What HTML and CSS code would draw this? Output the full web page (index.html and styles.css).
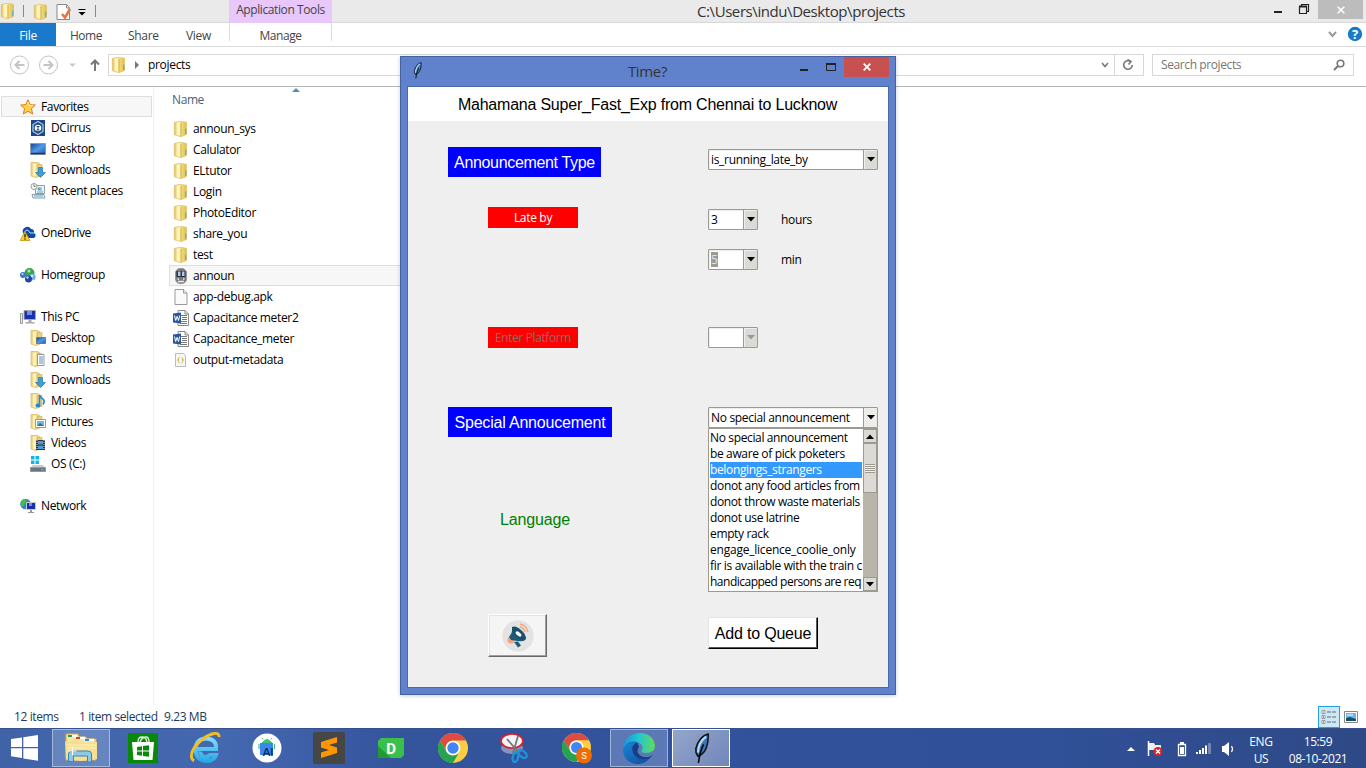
FILE: index.html
```html
<!DOCTYPE html>
<html lang="en">
<head>
<meta charset="utf-8">
<title>projects</title>
<link rel="stylesheet" href="styles.css">
</head>
<body>
<svg class="defs" aria-hidden="true">
  <defs>
    <linearGradient id="gold" x1="0" x2="1"><stop offset="0" stop-color="#d9b750"/><stop offset=".25" stop-color="#fff3b5"/><stop offset=".6" stop-color="#f1dc7c"/><stop offset="1" stop-color="#dfbd4c"/></linearGradient>
    <linearGradient id="sky" x1="0" y1="0" x2="1" y2="1"><stop offset="0" stop-color="#173f94"/><stop offset=".5" stop-color="#4f9be6"/><stop offset="1" stop-color="#1f58ad"/></linearGradient>
    <linearGradient id="edge" x1="0" x2="1"><stop offset="0" stop-color="#1695dc"/><stop offset=".5" stop-color="#25c6d2"/><stop offset="1" stop-color="#62dc55"/></linearGradient>
    <linearGradient id="edgeb" x1="0" y1="0" x2="1" y2="1"><stop offset="0" stop-color="#1a87d9"/><stop offset="1" stop-color="#114a9c"/></linearGradient>
    <linearGradient id="ieg" x1="0" y1="0" x2="0" y2="1"><stop offset="0" stop-color="#7fdcff"/><stop offset="1" stop-color="#2ba8e4"/></linearGradient>
    <symbol id="folder" viewBox="0 0 16 16"><path d="M1.300 1.500 6.500.3l7 1v12.200L8 15.700 1.300 13.800z" fill="url(#gold)" stroke="#dcc06a" stroke-width=".7"/><path d="M4.500 2.500 7.500 1.200v13.600l-2.500-1z" fill="#fff4bd"/><path d="M8 2v12.800" stroke="#cfae49"/><path d="M12.800 7.500v5.500" stroke="#4aa5c8" stroke-width="1"/></symbol>
    <symbol id="half" viewBox="0 0 16 16"><path d="M1 .5h6.500l2 1v13L5.500 15.500 1 14z" fill="#eed891" stroke="#d3b65b" stroke-width=".7"/><path d="M3 2 6 1v13l-3 .5z" fill="#fff0b6"/><path d="M7.500 2.500h4.500v11H7.500z" fill="#ead182" stroke="#cfad51" stroke-width=".6"/></symbol>
    <symbol id="chrome" viewBox="0 0 30 30"><circle cx="15" cy="15" r="15" fill="#fbce45"/><path d="M2 7.500A15 15 0 0 1 28 7.500H15a7.500 7.500 0 0 0-6.500 11z" fill="#de4b40"/><path d="M2 7.500A15 15 0 0 0 15 30l6.500-11.300A7.500 7.500 0 0 1 8.500 18.700z" fill="#24a353"/><circle cx="15" cy="15" r="7.300" fill="#fff"/><circle cx="15" cy="15" r="5.700" fill="#4285f4"/></symbol>
    <symbol id="word" viewBox="0 0 16 16"><path d="M5 .5h7l3.500 3.500v11.500H5z" fill="#fff" stroke="#888"/><path d="M12 .5V4h3.500" fill="none" stroke="#888"/><path d="M8 5.500h6M9 7.500h5M9 9.500h5M8 11.500h6M7 13.500h7" stroke="#777"/><path d="M0 3.500 8 2.500v11L0 12.500z" fill="#2b579a"/><path d="m1.500 5.500 1.200 5 1.400-4.200 1.400 4.200 1.200-5" fill="none" stroke="#fff"/></symbol>
    <symbol id="feather" viewBox="0 0 16 30"><path d="M14.500 1C9 2 4 8 2.500 15c-.5 3 .3 5 2 7.500C9 21 13 16 14 9c.4-3 .7-6 .5-8z" fill="#3f74b8" stroke="#111" stroke-width="1.400"/><path d="M12.500 3.500C8 6.500 5 12 4.500 19" fill="none" stroke="#b9dcf5" stroke-width="2"/><path d="M10 11C8.500 14 6.500 18 5 29" fill="none" stroke="#000" stroke-width="1.500"/></symbol>
    <symbol id="down" viewBox="0 0 10 5"><path d="M1 0h8L5 4.500z" fill="currentColor"/></symbol>
    <symbol id="darrow" viewBox="0 0 16 16"><path d="M8.500 5.500h4v5h3L10.500 15.500l-5-5h3z" fill="#39a0df" stroke="#2278b0" stroke-width=".7"/></symbol>
    <symbol id="pc" viewBox="0 0 16 16"><path d="M.5 4.500h2v10h-2z" fill="#eee" stroke="#999"/><path d="M4 1.500h11.500v9H4z" fill="#1b31a8" stroke="#aaa"/><path d="M7 2h5v4H7z" fill="#6d8bf0"/><path d="M8.500 11h3v2h3v1.500H5.500V13h3z" fill="#aaa"/></symbol>
  </defs>
</svg>

<div class="desktop">
  <header class="titlebar">
    <svg class="ic qa1"><use href="#folder"/></svg><i class="sep s1"></i>
    <svg class="ic qa2"><use href="#folder"/></svg>
    <svg class="ic qa3" viewBox="0 0 16 16"><path d="M1 .5h9.500L13.500 4v11.500H1z" fill="#fff" stroke="#888"/><path d="M10.500.5V4h3" fill="none" stroke="#888"/><path d="m6 10 3 3.500 5-8.500" fill="none" stroke="#e87440" stroke-width="2.600"/></svg>
    <svg class="qa4" viewBox="0 0 8 7"><path d="M.5 0h7v1h-7z"/><path d="M.5 3h7L4 6.500z"/></svg><i class="sep s2"></i>
    <span class="tools">Application Tools</span>
    <span class="path">C:\Users\indu\Desktop\projects</span>
    <svg class="winbtns" viewBox="0 0 46 22"><path d="M1 12h8" stroke="#222" stroke-width="2"/><path d="M26.500 6.500h7v7h-7zM28.500 6V4.500h7v7H34" fill="none" stroke="#222" stroke-width="1.200"/><path d="M26 6.500h8" stroke="#222" stroke-width="2"/></svg>
    <span class="close"><svg viewBox="0 0 8 8"><path d="m.7.7 6.600 6.600m0-6.600L.7 7.300" stroke="#fff" stroke-width="1.600"/></svg></span>
  </header>
  <nav class="ribbon">
    <b class="file">File</b><span class="t-home">Home</span><span class="t-share">Share</span><span class="t-view">View</span><span class="t-manage">Manage</span>
    <svg class="help" viewBox="0 0 36 16"><path d="m1 6 3.500 4L8 6" fill="none" stroke="#999" stroke-width="2"/><circle cx="27" cy="8" r="7.200" fill="#1979ca"/><text x="27" y="13" text-anchor="middle" font-family="Open Sans" font-weight="700" font-size="13" fill="#fff">?</text></svg>
  </nav>
  <div class="address">
    <svg class="arrows" viewBox="0 0 96 22"><g fill="none" stroke="#c4c4c4"><circle cx="11.500" cy="11" r="9"/><circle cx="40.500" cy="11" r="9"/><path d="M16.500 11h-9m4-4-4 4 4 4M35.500 11h9m-4-4 4 4-4 4" stroke-width="2"/></g><path d="M61 9.500h7L64.500 13z" fill="#ccc"/><path d="M87 17V6.500m-4 4 4-4 4 4" fill="none" stroke="#777" stroke-width="2"/></svg>
    <div class="addrbox"><svg class="ic"><use href="#folder"/></svg><svg class="crumb" viewBox="0 0 4 8"><path d="m0 0 4 4-4 4z" fill="#777"/></svg><span>projects</span>
      <svg class="chev" viewBox="0 0 8 6"><path d="m1 1 3 3.500L7 1" fill="none" stroke="#777" stroke-width="1.600"/></svg><i></i>
      <svg class="refresh" viewBox="0 0 12 12"><path d="M8.500 2.500A4.300 4.300 0 1 0 10.300 6M5.500.5 9 2.500 6.500 5.500" fill="none" stroke="#777" stroke-width="1.600"/></svg></div>
    <div class="search"><span>Search projects</span><svg viewBox="0 0 12 12"><circle cx="7.500" cy="4.500" r="3.300" fill="none" stroke="#777" stroke-width="1.600"/><path d="M5 7 1 11" stroke="#777" stroke-width="2"/></svg></div>
  </div>
  <main class="content">
    <aside class="tree">
      <div class="node root active"><svg class="ic" viewBox="0 0 16 16"><path d="m8 .7 2.200 4.900 5.200.5-4 3.500 1.300 5.400L8 12.300 3.300 15l1.300-5.400-4-3.500 5.200-.5z" fill="#ffcf45" stroke="#e27a20"/><path d="m8 3 1.200 3.500H13" fill="none" stroke="#fff3a0"/></svg><span>Favorites</span></div>
      <div class="node"><svg class="ic" viewBox="0 0 16 16"><path d="M1 0h14v16H1z" fill="#1c4684"/><path d="m8 1.500 5 3v7l-5 3-5-3v-7z" fill="none" stroke="#a9c9eb" stroke-width="1.300"/><circle cx="8" cy="8" r="3.300" fill="#fff"/><path d="M6.500 6.500h3m-1.500 0V10m-1.500 0h3" stroke="#1c4684"/></svg><span>DCirrus</span></div>
      <div class="node"><svg class="ic" viewBox="0 0 16 16"><path d="M.5 2.500h15v11H.5z" fill="url(#sky)" stroke="#8c9cac"/><path d="M1 12.500h14" stroke="#203858" stroke-width="1.500"/></svg><span>Desktop</span></div>
      <div class="node"><svg class="ic" viewBox="0 0 16 16"><use href="#half"/><use href="#darrow"/></svg><span>Downloads</span></div>
      <div class="node"><svg class="ic" viewBox="0 0 16 16"><path d="M5.500 2.500h9v8h-9zM2 11.500h12l1 3.500H3z" fill="#eef4f6" stroke="#8aa0aa"/><path d="M8 5h2v2H8zM11 4v4M7 9h6M4 13h9" stroke="#59a8d0" fill="#59a8d0"/><circle cx="4" cy="3.500" r="3" fill="#f7f7f7" stroke="#999"/><path d="M4 1.500v2h1.500" stroke="#777" fill="none"/></svg><span>Recent places</span></div>
      <div class="node gap"></div>
      <div class="node root"><svg class="ic" viewBox="0 0 16 16"><path d="M3 8a4.500 4.500 0 0 1 8-4 3 3 0 0 1 3 4q2 .8 1.500 3.500L14 13H8z" fill="#0d4aa5"/><path d="M4 8q3-6 6 0h4" stroke="#fff" fill="none" stroke-width=".8"/><path d="m5 6.500 5 9H.2z" fill="#ffcf20" stroke="#b58b00" stroke-width=".7"/><path d="M5 9v3.500m0 1v1.300" stroke="#222" stroke-width="1.300"/></svg><span>OneDrive</span></div>
      <div class="node gap"></div>
      <div class="node root"><svg class="ic" viewBox="0 0 16 16"><circle cx="9.500" cy="6" r="5" fill="#35a848"/><circle cx="3" cy="8" r="3" fill="#3c74c9"/><circle cx="12.500" cy="10" r="3.200" fill="#79aee7"/><circle cx="8.500" cy="12" r="3.500" fill="#2447a2"/><circle cx="2.500" cy="7" r="1" fill="#d2e5fa"/><circle cx="7.500" cy="10.500" r="1.200" fill="#b6cff5"/><circle cx="9" cy="4" r="1.500" fill="#b1eab0"/><circle cx="12" cy="9" r="1" fill="#fff"/></svg><span>Homegroup</span></div>
      <div class="node gap"></div>
      <div class="node root"><svg class="ic"><use href="#pc"/></svg><span>This PC</span></div>
      <div class="node"><svg class="ic" viewBox="0 0 16 16"><use href="#half"/><path d="M6.500 7.500h9v6h-9z" fill="url(#sky)" stroke="#777"/></svg><span>Desktop</span></div>
      <div class="node"><svg class="ic" viewBox="0 0 16 16"><use href="#half"/><path d="M7.500 3.500h6.500v11H7.500z" fill="#fff" stroke="#999"/><path d="M9 6h4M9 8h4M9 10h4M9 12h4" stroke="#5590b8"/></svg><span>Documents</span></div>
      <div class="node"><svg class="ic" viewBox="0 0 16 16"><use href="#half"/><use href="#darrow"/></svg><span>Downloads</span></div>
      <div class="node"><svg class="ic" viewBox="0 0 16 16"><use href="#half"/><path d="M9.500 12V2q1 3 4 4.500 1.500 2-.5 5" fill="none" stroke="#2689cd" stroke-width="1.600"/><ellipse cx="8" cy="12.500" rx="2.500" ry="2" fill="#2689cd"/></svg><span>Music</span></div>
      <div class="node"><svg class="ic" viewBox="0 0 16 16"><use href="#half"/><path d="M5.500 5.500h10v8h-10z" fill="#fff" stroke="#999"/><path d="M7 7h7v5H7z" fill="#69b9e5"/><path d="m7 12 3-3 4 3z" fill="#347e5c"/></svg><span>Pictures</span></div>
      <div class="node"><svg class="ic" viewBox="0 0 16 16"><use href="#half"/><path d="M6 5h9v10H6z" fill="#333"/><path d="M8 6h5v8H8z" fill="#4d9bd2"/><path d="M7 5v10M14 5v10" stroke="#ddd" stroke-dasharray="1"/><path d="M8 10h5" stroke="#222"/></svg><span>Videos</span></div>
      <div class="node"><svg class="ic" viewBox="0 0 16 16"><path d="M1 0h3.500v3.500H1zM5.500 0H9v3.500H5.500zM1 4.500h3.500V8H1zM5.500 4.500H9V8H5.500z" fill="#12b5ea"/><path d="M3 9h10l2.500 3H.5z" fill="#c8ccce"/><path d="M.5 11.500h15v4H.5z" fill="#647782" stroke="#8b9ba3"/><path d="M11 13.500h3" stroke="#32db45"/></svg><span>OS (C:)</span></div>
      <div class="node gap"></div>
      <div class="node root"><svg class="ic" viewBox="0 0 16 16"><circle cx="5.500" cy="6" r="5.300" fill="#2b86d2"/><path d="M2 2q3-2 5 0L5 5 3 9 .7 7zM6 9l3-2v4H5z" fill="#4abd48"/><path d="M6.500 4.500h9v7h-9z" fill="#1b31a8" stroke="#ccc"/><path d="M9 5h3v3H9z" fill="#718df0"/><path d="M10 12h2v2h2v1H8v-1h2z" fill="#999"/></svg><span>Network</span></div>
    </aside>
    <section class="files">
      <div class="colhead"><span>Name</span><svg viewBox="0 0 8 4"><path d="M0 4 4 0l4 4z" fill="#4d93ad"/></svg></div>
      <div class="row"><svg class="ic"><use href="#folder"/></svg><span>announ_sys</span></div>
      <div class="row"><svg class="ic"><use href="#folder"/></svg><span>Calulator</span></div>
      <div class="row"><svg class="ic"><use href="#folder"/></svg><span>ELtutor</span></div>
      <div class="row"><svg class="ic"><use href="#folder"/></svg><span>Login</span></div>
      <div class="row"><svg class="ic"><use href="#folder"/></svg><span>PhotoEditor</span></div>
      <div class="row"><svg class="ic"><use href="#folder"/></svg><span>share_you</span></div>
      <div class="row"><svg class="ic"><use href="#folder"/></svg><span>test</span></div>
      <div class="row sel"><svg class="ic" viewBox="0 0 16 16"><rect x="2.500" y=".5" width="11" height="15" rx="4.500" fill="#77777c" stroke="#999"/><path d="M3.500 3h9v6h-9z" fill="#293344"/><path d="M5 3.500h2.500V8H5zM9 3.500h2.500V8H9z" fill="#b8c6de"/><path d="M4.500 11H6m4 0h1.500M5 13.500h6" stroke="#eee" stroke-width="1.300"/></svg><span>announ</span></div>
      <div class="row"><svg class="ic" viewBox="0 0 16 16"><path d="M2 .5h8.500L14 4v11.500H2z" fill="#fafafa" stroke="#999"/><path d="M10.500.5V4H14" fill="#eee" stroke="#999"/></svg><span>app-debug.apk</span></div>
      <div class="row"><svg class="ic"><use href="#word"/></svg><span>Capacitance meter2</span></div>
      <div class="row"><svg class="ic"><use href="#word"/></svg><span>Capacitance_meter</span></div>
      <div class="row"><svg class="ic" viewBox="0 0 16 16"><path d="M2.500 1.500h8l2 2v11h-10z" fill="#f6f6f6" stroke="#bbb"/><path d="M6.500 5.500q-1 0-1 1.500t-1 1q1 0 1 1.500t1 1.500M8.500 5.500q1 0 1 1.500t1 1q-1 0-1 1.500t-1 1.500" fill="none" stroke="#c2b944"/></svg><span>output-metadata</span></div>
    </section>
  </main>
  <footer class="status"><span class="st1">12 items</span><span class="st2">1 item selected</span><span class="st3">9.23 MB</span>
    <div class="view"><svg viewBox="0 0 16 14"><path d="M1 .5h3v3H1zM1 5.500h3v3H1zM1 10.500h3v3H1z" fill="#fff" stroke="#888" stroke-width=".8"/><path d="M6 2h4m1 0h4M6 7h4m1 0h4M6 12h4m1 0h4" stroke="#667"/><path d="M2 2h1" stroke="#39a" /><path d="M2 7h1" stroke="#d00"/><path d="M2 12h1" stroke="#06c"/></svg></div>
    <svg class="thumb" viewBox="0 0 14 12"><path d="M.5.500h13v11H.5z" fill="#fff" stroke="#888"/><path d="M2 2h10v8H2z" fill="#67b8e8"/><path d="m2 7 4-1 6 2v2H2z" fill="#164f66"/><path d="M3 4h6" stroke="#fff"/></svg>
  </footer>
  <div class="taskbar">
    <div class="start"><svg viewBox="0 0 27 26"><path d="m0 4 11-1.600V12H0zM12.300 2.200 27 0v12H12.300zM0 13.300h11V23L0 21.300zM12.300 13.300H27v12.400l-14.700-2.200z" fill="#fff"/></svg></div>
    <div class="task on"><svg width="34" height="30" viewBox="0 0 34 30"><path d="M2 4V1h12l1 3h7l1 2h9v21H2z" fill="#f7e39a" stroke="#dcae42"/><path d="M5 3h8M12 5h9M20 7h10" stroke="#fff" stroke-width="2.500"/><path d="M4 3h4" stroke="#18a549" stroke-width="2"/><path d="M12 5h4" stroke="#d6462f" stroke-width="2"/><path d="M21 7h4" stroke="#338acf" stroke-width="2"/><path d="M1 8.500 12 7l1 2h20v17q-16 4-31 0z" fill="#f5df93"/><path d="M3 12h29M3 15h29" stroke="#fff3bf"/><path d="M4.500 28.500V21q0-3 4-3h15q4 0 4 3v8h-4v-6h-14v5.500z" fill="#8fc9e8" stroke="#3487b0"/><path d="M8.500 14v8m-4-4h8" stroke="#fff"/></svg></div>
    <div class="task"><svg width="30" height="30" viewBox="0 0 30 30"><path d="M0 0h30v30H0z" fill="#088a08"/><path d="M4 9h22l-1.500 18h-19z" fill="#fff"/><path d="M10 9q0-5 4-5t5 5M12 9q2-5 6-5 3 0 3 5" fill="none" stroke="#dff3df" stroke-width="1.300"/><path d="m9 14 5-.8v4.300H9zM15 13l6-.8v5.300h-6zM9 18.500h5v4.300L9 22zM15 18.500h6v5.300l-6-.9z" fill="#088a08"/></svg></div>
    <div class="task"><svg width="32" height="32" viewBox="0 0 32 32"><path d="M8 17h19q1-10-10-10.500Q7 7 6.500 17.500 7 28.500 17 29q8 0 10-6h-6q-4 4-8 .5-2-2-1.800-4" fill="none" stroke="url(#ieg)" stroke-width="4"/><path d="M5 29C-1 25 4 14 14 7 21 1 31-1 30 5" fill="none" stroke="#f4bd20" stroke-width="2.800"/></svg></div>
    <div class="task"><svg width="30" height="30" viewBox="0 0 30 30"><circle cx="15" cy="15" r="14.500" fill="#fff"/><path d="M10 10q5-7 10 0zM11 6.500 10 5M19 6.500 20 5" fill="#3ac57a" stroke="#3ac57a"/><path d="M8 10h13v12H8z" fill="#3d85ef"/><path d="M7 11v5M22.500 11v5" stroke="#3ac57a" stroke-width="1.200"/><text x="16" y="22.500" text-anchor="middle" font-family="Lato" font-weight="700" font-size="11" fill="#082f52">AI</text></svg></div>
    <div class="task"><svg width="32" height="32" viewBox="0 0 32 32"><rect width="32" height="32" rx="2" fill="#464646"/><path d="m8 10 16-5v5.500L16 13l8 2.500V21L8 26v-5.500l8-2.500-8-2.500z" fill="#ff9800"/></svg></div>
    <div class="task"><svg width="26" height="20" viewBox="0 0 26 20"><path d="M3 0h23v17l-3 3H0V3z" fill="#39c04a"/><path d="M0 8 13 20H0z" fill="#1f9b33"/><text x="13" y="15.500" text-anchor="middle" font-family="Roboto" font-weight="700" font-size="15" fill="#fff">D</text></svg></div>
    <div class="task"><svg width="30" height="30"><use href="#chrome"/></svg></div>
    <div class="task"><svg width="30" height="30" viewBox="0 0 30 30"><ellipse cx="12" cy="15" rx="11" ry="6" fill="#8592b9"/><ellipse cx="12" cy="8" rx="11" ry="7" fill="#f4f4f8" stroke="#d8202c" stroke-width="1.700"/><path d="m7 6 12 14M18 3l-5 17" stroke="#777" stroke-width="1.800"/><g fill="none" stroke="#1b94db" stroke-width="2.300"><ellipse cx="22.500" cy="21" rx="3" ry="5" transform="rotate(-48 22.500 21)"/><ellipse cx="15.500" cy="24" rx="2.600" ry="5" transform="rotate(15 15.500 24)"/></g></svg></div>
    <div class="task"><svg width="30" height="31" viewBox="0 0 30 31"><use href="#chrome" width="29" height="29"/><circle cx="22" cy="22.500" r="8" fill="#ef6c00"/><text x="22" y="26" text-anchor="middle" font-family="Roboto" font-size="9.500" fill="#fff">S</text></svg></div>
    <div class="task on"><svg width="32" height="32" viewBox="0 0 32 32"><path d="M0 17C1-2 29-5 32 13q0 8-9 8-6 0-4-3 2-6-5-8Q5 8 0 17z" fill="url(#edge)"/><path d="M0 17Q5 7 14 10q-7 4-4 11 5 9 16 6-6 6-14 5Q0 29 0 17z" fill="url(#edgeb)"/><path d="M14 10q-7 4-4 11 5 9 16 6l4-4q-6 4-12 1-6-4-2-9z" fill="#123f88"/></svg></div>
    <div class="task on cur"><svg width="17" height="31"><use href="#feather"/></svg></div>
    <svg class="tray" viewBox="0 0 112 18"><path d="M1 11 5 7l4 4z" fill="#fff"/><path d="M22.500 1v15" stroke="#fff" stroke-width="1.500"/><path d="M23 3h5l1 2h6v7h-6l-1-2h-5z" fill="#eee"/><circle cx="32" cy="11.500" r="4.500" fill="#d82424"/><path d="m30 9.500 4 4m0-4-4 4" stroke="#fff" stroke-width="1.400"/><path d="M52.500 4.500h7v11h-7z" fill="none" stroke="#fff" stroke-width="1.300"/><path d="M54 7h4v7h-4zM54 2h4v2h-4z" fill="#fff"/><path d="M70 14v-2h2v2zM73 14v-4h2v4zM76 14V8h2v6zM79 14V5.500h2V14z" fill="#fff"/><path d="M82.500 13.500v-10h2v10z" fill="#7185b4" stroke="#8c9ac1" stroke-width=".6"/><path d="M96 6h2l5-4v14l-5-4h-2z" fill="#fff"/><path d="M105.500 6q2 3 0 6" fill="none" stroke="#fff" stroke-width="1.200"/></svg>
    <div class="lang"><span>ENG</span><span>US</span></div>
    <div class="clock"><span>15:59</span><span>08-10-2021</span></div>
  </div>
</div>

<div class="dialog">
  <div class="dtitle"><svg class="dfeather"><use href="#feather"/></svg><span>Time?</span>
    <svg class="dbtns" viewBox="0 0 38 14"><path d="M1 10h8" stroke="#222" stroke-width="2"/><path d="M27.500 3.500h9v7h-9z" fill="none" stroke="#222"/><path d="M27 4h10" stroke="#222" stroke-width="2"/></svg>
    <b class="dclose"><svg viewBox="0 0 8 8"><path d="m.7.7 6.600 6.600m0-6.600L.7 7.300" stroke="#fff" stroke-width="1.800"/></svg></b>
  </div>
  <div class="client">
    <div class="banner"><span>Mahamana Super_Fast_Exp from Chennai to Lucknow</span></div>
    <div class="form">
      <div class="left">
        <div class="blue type">Announcement Type</div>
        <div class="red late">Late by</div>
        <div class="red plat">Enter Platform</div>
        <div class="blue special">Special Annoucement</div>
        <div class="language">Language</div>
        <div class="speak"><svg viewBox="0 0 32 32"><circle cx="16" cy="16" r="15.700" fill="#e3e3e3"/><circle cx="9" cy="20" r="3.500" fill="#f9a27b"/><path d="M11 7 23 20Q21 22 15 21L9 20 7 17l2.500-4z" fill="#1f5b78"/><path d="M10 7q4-2 9 3 5 4 5 9-2 3-8-1-7-6-6-11z" fill="#19506b"/><ellipse cx="16.500" cy="14" rx="1.800" ry="3.500" transform="rotate(-48 16.500 14)" fill="#fff"/><path d="m12 22 4-.5 3 4-3 2z" fill="#1f5b78"/><path d="M18 7q4 1 5 5M18 4q6 1 8 8" fill="none" stroke="#f9a27b" stroke-width="1.300"/></svg></div>
      </div>
      <div class="right">
        <div class="combo wide c1"><span class="txt">is_running_late_by</span><span class="dd"><svg><use href="#down"/></svg></span></div>
        <div class="pair c2"><div class="combo"><span class="txt">3</span><span class="dd"><svg><use href="#down"/></svg></span></div><span class="unit">hours</span></div>
        <div class="pair c3"><div class="combo"><span class="txt"><mark>5</mark></span><span class="dd"><svg><use href="#down"/></svg></span></div><span class="unit">min</span></div>
        <div class="combo off c4"><span class="txt"></span><span class="dd"><svg><use href="#down"/></svg></span></div>
        <div class="combo wide c5"><span class="txt">No special announcement</span><span class="dd"><svg><use href="#down"/></svg></span></div>
        <div class="list">
          <div class="opts"><p>No special announcement</p><p>be aware of pick poketers</p><p class="hot">belongings_strangers</p><p class="loose">donot any food articles from</p><p class="snug">donot throw waste materials</p><p>donot use latrine</p><p>empty rack</p><p class="wider">engage_licence_coolie_only</p><p class="loose">fir is available with the train c</p><p class="tight">handicapped persons are req</p></div>
          <div class="bar"><span class="sb up"><svg><use href="#down"/></svg></span><span class="grip"><i></i></span><span class="sb"><svg><use href="#down"/></svg></span></div>
        </div>
        <div class="add">Add to Queue</div>
      </div>
    </div>
  </div>
</div>
</body>
</html>
```

FILE: styles.css
```css
* { box-sizing: border-box; }
body { margin: 0; width: 1366px; height: 768px; overflow: hidden; font: 12px/16px "Open Sans", "Noto Sans", sans-serif; letter-spacing: -.32px; color: #000; background: #fff; }
.defs { position: absolute; width: 0; height: 0; }
svg { display: block; flex: none; }
span, b, p { white-space: nowrap; }
.ic { width: 16px; height: 16px; }
.desktop { display: flex; flex-direction: column; width: 1366px; height: 768px; }

.titlebar { display: flex; height: 23px; background: #eaeaea; border-bottom: 1px solid #d8d8d8; }
.qa1 { margin: 3px 0 0 0; }
.sep { width: 1px; height: 12px; margin-top: 5px; background: #888; flex: none; }
.s1 { margin-left: 7px; }
.qa2 { margin: 4px 0 0 9px; }
.qa3 { margin: 4px 0 0 7px; }
.qa4 { width: 8px; height: 7px; margin: 9px 0 0 6px; }
.s2 { margin-left: 9px; }
.tools { width: 103px; margin-left: 133px; height: 23px; padding-top: 2px; text-align: center; background: #e8c8fb; color: #444; letter-spacing: -.4px; }
.path { margin-left: 365px; padding-top: 1px; width: 300px; font-size: 15px; line-height: 21px; letter-spacing: -.42px; color: #333; }
.winbtns { width: 46px; height: 22px; margin-left: 276px; }
.close { display: flex; align-items: center; justify-content: center; width: 45px; height: 19px; margin-left: -1px; background: #bcbcbc; }
.close svg, .dclose svg { width: 8px; height: 8px; }

.ribbon { display: flex; height: 24px; border-bottom: 1px solid #dadbdc; line-height: 26px; color: #444; flex: none; }
.file { width: 56px; text-align: center; font-weight: 400; color: #fff; background: #1979ca; height: 23px; line-height: 25px; }
.t-home { margin-left: 14px; width: 58px; letter-spacing: -.5px; }
.t-share { width: 58px; }
.t-view { width: 43px; }
.t-manage { width: 103px; height: 18px; text-align: center; border: solid #ddd; border-width: 0 1px; letter-spacing: -.45px; }
.help { width: 36px; height: 16px; margin: 3px 0 0 996px; }

.address { display: flex; height: 40px; flex: none; border-bottom: 1px solid #b4b4b4; padding: 7px 0 0 8px; }
.arrows { width: 96px; height: 22px; }
.addrbox { display: flex; align-items: center; width: 1036px; height: 22px; margin-left: 4px; border: 1px solid #d9d9d9; padding-left: 2px; }
.crumb { width: 4px; height: 8px; margin: 0 9px 0 8px; }
.chev { width: 8px; height: 6px; margin-left: auto; }
.addrbox i { width: 1px; height: 20px; background: #d9d9d9; margin: 0 7px 0 5px; }
.refresh { width: 12px; height: 12px; margin-right: 9px; }
.search { display: flex; align-items: center; width: 202px; height: 22px; margin-left: 8px; border: 1px solid #d9d9d9; padding: 0 8px; color: #767676; justify-content: space-between; letter-spacing: -.4px; }
.search svg { width: 12px; height: 12px; }

.content { display: flex; height: 619px; }
.tree { width: 154px; padding-top: 9px; border-right: 1px solid #f0f0f0; flex: none; }
.node { display: flex; align-items: center; gap: 5px; height: 21px; padding-left: 30px; letter-spacing: -.36px; }
.root { padding-left: 20px; }
.active { margin-left: 1px; width: 151px; padding-left: 18px; background: #f7f7f7; border: 1px solid #dedede; }
.files { width: 260px; padding-left: 15px; }
.colhead { display: flex; height: 31px; padding: 5px 0 0 3px; color: #4c607a; letter-spacing: -.4px; }
.colhead svg { width: 8px; height: 4px; margin: -4px 0 0 88px; }
.row { display: flex; align-items: center; gap: 4px; height: 21px; padding-left: 4px; letter-spacing: -.34px; }
.row span { padding-top: 1px; }
.sel { background: #f7f7f7; border: 1px solid #dedede; padding-left: 3px; }

.status { display: flex; align-items: center; height: 22px; color: #1e395b; letter-spacing: -.4px; }
.st1 { margin-left: 14px; width: 65px; }
.st2 { width: 85px; }
.st3 { width: 60px; }
.view { display: flex; align-items: center; justify-content: center; width: 22px; height: 22px; margin-left: 1094px; background: #cbe8f6; border: 1px solid #26a0da; }
.view svg { width: 16px; height: 14px; }
.thumb { width: 14px; height: 12px; margin-left: 4px; }

.taskbar { display: flex; height: 40px; background: linear-gradient(90deg, #4063a8 0, #4468b0 230px, #34549c 400px, #30519a 1000px, #2e4986 100%); border-top: 1px solid #34508d; }
.start { width: 50px; padding: 6px 0 0 11px; }
.start svg { width: 27px; height: 26px; }
.task { display: flex; align-items: center; justify-content: center; width: 58px; height: 38px; margin: 0 2px; flex: none; }
.on { background: rgba(180, 200, 235, .33); border: 1px solid rgba(210, 222, 245, .58); }
.cur { background: linear-gradient(135deg, #93a6cb, #7186ba); border-color: #fff; }
.tray { width: 112px; height: 18px; margin: 11px 0 0 394px; }
.lang, .clock { display: flex; flex-direction: column; align-items: center; color: #fff; line-height: 17px; padding-top: 4px; }
.lang { width: 26px; margin-left: 10px; }
.clock { width: 62px; margin-left: 13px; letter-spacing: -.4px; }

.dialog { position: absolute; left: 400px; top: 56px; width: 496px; height: 639px; padding: 0 6px 6px; background: #6082cc; border: 1px solid #46629e; box-shadow: 0 1px 4px rgba(0, 0, 0, .2); }
.dtitle { display: flex; height: 29px; }
.dfeather { width: 9px; height: 17px; margin: 5px 0 0 6px; }
.dtitle > span { width: 44px; margin-left: 204px; font-size: 15px; line-height: 29px; letter-spacing: -.35px; color: #333; text-align: center; }
.dbtns { width: 38px; height: 14px; margin: 3px 0 0 130px; }
.dclose { display: flex; align-items: center; justify-content: center; width: 45px; height: 20px; margin-left: 7px; background: #c75050; flex: none; }
.client { display: flex; flex-direction: column; width: 482px; height: 602px; background: #efefef; border: 1px solid #4969a9; }
.banner { height: 34px; flex: none; padding-right: 1px; background: #fff; text-align: center; font: 16px/35px "Liberation Sans", Arial, sans-serif; letter-spacing: -.22px; }
.form { display: flex; }
.left { width: 300px; display: flex; flex-direction: column; align-items: flex-start; }
.right { width: 172px; display: flex; flex-direction: column; align-items: flex-start; }
.blue, .language, .add { font: 16px/31px "Liberation Sans", Arial, sans-serif; letter-spacing: -.2px; white-space: nowrap; }
.blue { height: 30px; background: #00f; color: #fff; text-align: center; margin-left: 40px; }
.blue.type { width: 153px; margin-top: 26px; letter-spacing: -.33px; }
.special { width: 164px; margin-top: 59px; }
.red { width: 90px; height: 21px; margin-left: 80px; background: #f00; color: #fff; text-align: center; line-height: 22px; }
.late { margin-top: 30px; }
.plat { margin-top: 99px; color: #85706b; letter-spacing: -.4px; }
.language { margin: 71px 0 0 92px; height: 24px; line-height: 23px; color: #008000; letter-spacing: -.15px; }
.speak { display: flex; align-items: center; justify-content: center; width: 59px; height: 43px; margin: 82px 0 0 80px; background: #f5f5f5; border: 1px solid #fff; border-right-color: #696969; border-bottom-color: #696969; box-shadow: inset -1px -1px #a0a0a0, inset 1px 1px #e3e3e3; }
.speak svg { width: 32px; height: 32px; }
.combo { display: flex; width: 50px; height: 21px; background: #fff; border: 1px solid #9e9a91; border-radius: 1px; flex: none; box-shadow: inset 1px 1px #eee; }
.wide { width: 170px; }
.txt { flex: 1; padding-left: 2px; line-height: 20px; }
.dd { display: flex; align-items: center; justify-content: center; width: 14px; border-left: 1px solid #9e9a91; background: #dcdad5; box-shadow: inset 1px 1px #eee; }
.dd svg, .sb svg { width: 10px; height: 5px; }
.c5 .dd { background: #eeede9; }
mark { display: inline-block; height: 15px; line-height: 15px; background: #9e9a91; color: #d5e5fa; }
.off .dd { color: #999; }
.c1 { margin-top: 28px; }
.c2 { margin-top: 39px; }
.c3 { margin-top: 19px; }
.c4 { margin-top: 57px; }
.c5 { margin-top: 59px; }
.pair { display: flex; height: 21px; line-height: 22px; }
.unit { margin-left: 23px; }
.list { display: flex; width: 170px; height: 164px; border: 1px solid #9e9a91; background: #fff; }
.opts { width: 154px; padding: 1px 1px 0; }
p { margin: 0; height: 16px; letter-spacing: -.36px; }
.snug { letter-spacing: -.4px; }
.tight { letter-spacing: -.5px; }
.loose { letter-spacing: -.33px; }
.wider { letter-spacing: -.22px; }
.hot { background: #3399ff; color: #fff; }
.bar { display: flex; flex-direction: column; width: 14px; background: #b9b5ab; }
.sb { display: flex; align-items: center; justify-content: center; height: 14px; background: #dcdad5; border: 1px solid #eee; outline: 1px solid #9e9a91; outline-offset: -1px; }
.sb:last-child { margin-top: auto; }
.up svg { transform: scaleY(-1); }
.grip { display: flex; align-items: center; height: 50px; background: #dcdad5; border: 1px solid #9e9a91; }
.grip i { width: 10px; height: 9px; margin-left: 1px; background: repeating-linear-gradient(#9e9a91 0 1px, #eee 1px 2px); }
.add { width: 110px; height: 32px; margin-top: 25px; background: #fff; text-align: center; border: 1px solid #e3e3e3; border-right: 1px solid #000; border-bottom: 1px solid #000; box-shadow: inset -1px -1px #555; }
```
